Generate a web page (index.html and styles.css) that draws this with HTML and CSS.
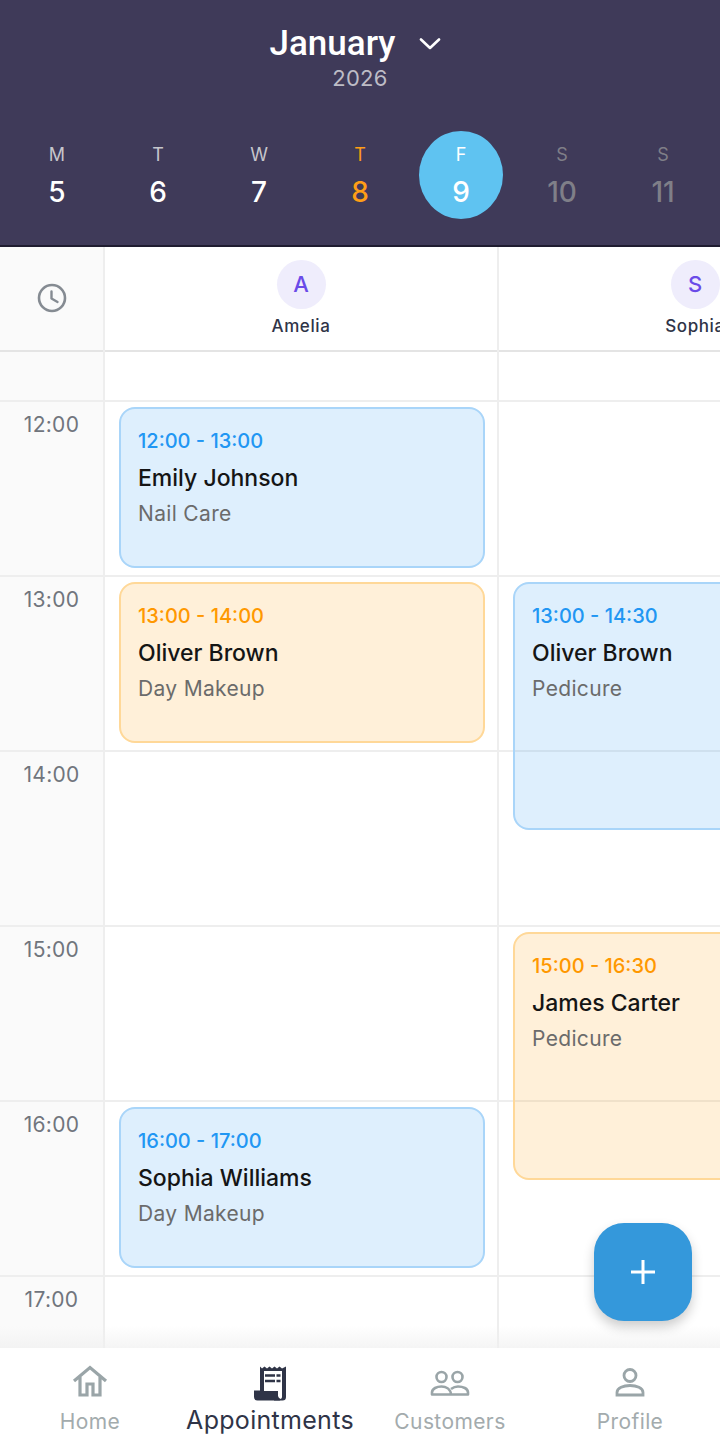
FILE: index.html
```html
<!DOCTYPE html>
<html lang="en">
<head>
    <meta charset="UTF-8">
    <meta name="viewport" content="width=device-width, initial-scale=1.0">
    <title>Appointments</title>
    <link rel="stylesheet" href="styles.css">
</head>
<body>
<div class="app">
    <header class="cal-header">
        <div class="month-row">
            <span class="month-name">January</span>
            <svg class="month-chevron" width="22" height="12" viewBox="0 0 22 12"><path d="M2 1.500 L11 10 L20 1.500" fill="none" stroke="#fff" stroke-width="2.600" stroke-linecap="round" stroke-linejoin="round"/></svg>
        </div>
        <div class="year">2026</div>
        <div class="week">
            <div class="day"><span class="day-letter">M</span><span class="day-num">5</span></div>
            <div class="day"><span class="day-letter">T</span><span class="day-num">6</span></div>
            <div class="day"><span class="day-letter">W</span><span class="day-num">7</span></div>
            <div class="day day-today"><span class="day-letter">T</span><span class="day-num">8</span></div>
            <div class="day day-selected"><span class="day-letter">F</span><span class="day-num">9</span></div>
            <div class="day day-off"><span class="day-letter">S</span><span class="day-num">10</span></div>
            <div class="day day-off"><span class="day-letter">S</span><span class="day-num">11</span></div>
        </div>
    </header>

    <main class="board">
        <div class="time-col">
            <div class="col-head">
                <svg width="32" height="32" viewBox="0 0 32 32"><circle cx="16" cy="16" r="13" fill="none" stroke="#858b92" stroke-width="2.600"/><path d="M15.500 9.500 V16.500 L21.500 20" fill="none" stroke="#858b92" stroke-width="2.400" stroke-linecap="round" stroke-linejoin="round"/></svg>
            </div>
            <div class="stub"></div>
            <div class="hour hour-label">12:00</div>
            <div class="hour hour-label">13:00</div>
            <div class="hour hour-label">14:00</div>
            <div class="hour hour-label">15:00</div>
            <div class="hour hour-label">16:00</div>
            <div class="hour hour-label">17:00</div>
        </div>

        <div class="staff-col">
            <div class="col-head">
                <div class="avatar">A</div>
                <div class="staff-name">Amelia</div>
            </div>
            <div class="col-body">
                <div class="stub"></div>
                <div class="hour"></div>
                <div class="hour"></div>
                <div class="hour"></div>
                <div class="hour"></div>
                <div class="hour"></div>
                <div class="hour"></div>
                <div class="event event-blue" style="top: 55px; height: 161px">
                    <div class="event-time">12:00 - 13:00</div>
                    <div class="event-name">Emily Johnson</div>
                    <div class="event-service">Nail Care</div>
                </div>
                <div class="event event-orange" style="top: 230px; height: 161px">
                    <div class="event-time">13:00 - 14:00</div>
                    <div class="event-name">Oliver Brown</div>
                    <div class="event-service">Day Makeup</div>
                </div>
                <div class="event event-blue" style="top: 755px; height: 161px">
                    <div class="event-time">16:00 - 17:00</div>
                    <div class="event-name">Sophia Williams</div>
                    <div class="event-service">Day Makeup</div>
                </div>
            </div>
        </div>

        <div class="staff-col">
            <div class="col-head">
                <div class="avatar">S</div>
                <div class="staff-name">Sophia</div>
            </div>
            <div class="col-body">
                <div class="stub"></div>
                <div class="hour"></div>
                <div class="hour"></div>
                <div class="hour"></div>
                <div class="hour"></div>
                <div class="hour"></div>
                <div class="hour"></div>
                <div class="event event-blue" style="top: 230px; height: 248px">
                    <div class="event-time">13:00 - 14:30</div>
                    <div class="event-name">Oliver Brown</div>
                    <div class="event-service">Pedicure</div>
                </div>
                <div class="event event-orange" style="top: 580px; height: 248px">
                    <div class="event-time">15:00 - 16:30</div>
                    <div class="event-name">James Carter</div>
                    <div class="event-service">Pedicure</div>
                </div>
            </div>
        </div>

        <div class="board-fade"></div>
        <button class="fab" type="button" aria-label="Add">
            <svg width="26" height="26" viewBox="0 0 26 26"><path d="M13 1 V25 M1 13 H25" stroke="#fff" stroke-width="3"/></svg>
        </button>
    </main>

    <nav class="tabbar">
        <div class="tab">
            <svg class="tab-icon" width="36" height="32" viewBox="0 0 36 32"><path d="M2 16 L18 2.500 L34 16 M8 12 V30 H15 V19 H21 V30 H28 V12" fill="none" stroke="#9aa5a8" stroke-width="3.200"/></svg>
            <span class="tab-label">Home</span>
        </div>
        <div class="tab tab-active">
            <svg class="tab-icon" width="32" height="35" viewBox="0 0 32 35"><path d="M6 0.500 L8 2.500 L10.500 0.500 L13 2.500 L15.500 0.500 L18 2.500 L20.500 0.500 L23 2.500 L25.500 0.500 L28 2.500 L32 0.500 V31 A3.500 3.500 0 0 1 28.500 34.500 H3.500 A3.500 3.500 0 0 1 0 31 V24.500 H6 Z" fill="#2f3447"/><path d="M10 5 H28 V31 A2 2 0 0 1 26.500 33 A4 4 0 0 1 24 30 V25 H10 Z" fill="#fff"/><path d="M24 25 V30 A4 4 0 0 0 26.500 34.500 H20 V25 Z" fill="#2f3447"/><path d="M11 9.500 H21 M11 15 H21 M22.500 9.500 H26.500 M22.500 15 H26.500" stroke="#2f3447" stroke-width="2.400"/></svg>
            <span class="tab-label">Appointments</span>
        </div>
        <div class="tab">
            <svg class="tab-icon" width="40" height="28" viewBox="0 0 40 28"><circle cx="11.500" cy="8" r="5" fill="none" stroke="#9aa5a8" stroke-width="2.600"/><circle cx="27.500" cy="8" r="5" fill="none" stroke="#9aa5a8" stroke-width="2.600"/><path d="M2 25.500 V23.500 C2 19.500 7 17.500 11.500 17.500 C15.500 17.500 20.500 19.500 21 25.500 Z M21 20 C23 18.500 25.500 17.500 28 17.500 C33 17.500 38 19.500 38 23.500 V25.500 H21" fill="none" stroke="#9aa5a8" stroke-width="2.600" stroke-linejoin="round"/></svg>
            <span class="tab-label">Customers</span>
        </div>
        <div class="tab">
            <svg class="tab-icon" width="30" height="30" viewBox="0 0 30 30"><circle cx="15" cy="8.500" r="6" fill="none" stroke="#9aa5a8" stroke-width="2.800"/><path d="M2 28 V25.500 C2 21 8.500 18.500 15 18.500 C21.500 18.500 28 21 28 25.500 V28 Z" fill="none" stroke="#9aa5a8" stroke-width="2.800"/></svg>
            <span class="tab-label">Profile</span>
        </div>
    </nav>
</div>
</body>
</html>
```

FILE: styles.css
```css
html,
body {
    width: 100%;
    height: 100%;
    margin: 0;
    padding: 0;
}
body {
    font-family: Inter, "Liberation Sans", sans-serif;
    background-color: #ffffff;
    overflow: hidden;
}
.app {
    display: flex;
    flex-direction: column;
    width: 720px;
    height: 1450px;
}

/* header */
.cal-header {
    flex: none;
    box-sizing: border-box;
    height: 247px;
    padding: 24px 0 0;
    background-color: #3f3a59;
    border-bottom: 2px solid #1f1c30;
    color: #ffffff;
}
.month-row {
    display: flex;
    justify-content: center;
    align-items: center;
    gap: 24px;
    height: 40px;
    padding-right: 9px;
}
.month-name {
    font-family: Roboto, Inter, sans-serif;
    font-size: 35px;
    font-weight: 500;
    line-height: 40px;
}
.year {
    font-size: 22px;
    line-height: 28px;
    letter-spacing: .3px;
    text-align: center;
    color: #bdbcc6;
}
.week {
    display: flex;
    justify-content: center;
    gap: 17px;
    margin-top: 39px;
}
.day {
    display: flex;
    flex-direction: column;
    align-items: center;
    width: 84px;
    height: 88px;
    padding-top: 12px;
    box-sizing: border-box;
    border-radius: 50%;
}
.day-letter {
    font-size: 18px;
    line-height: 24px;
    color: #c6c6cc;
}
.day-num {
    margin-top: 8px;
    font-size: 28px;
    font-weight: 500;
    line-height: 34px;
}
.day-today .day-letter,
.day-today .day-num {
    color: #ff9e16;
}
.day-selected {
    background-color: #5fc3f1;
}
.day-selected .day-letter {
    color: #ffffff;
}
.day-off .day-letter,
.day-off .day-num {
    color: #7f7f88;
}

/* board */
.board {
    position: relative;
    flex: 1;
    display: flex;
    overflow: hidden;
    background-color: #ffffff;
}
.time-col {
    flex: none;
    width: 105px;
    box-sizing: border-box;
    background-color: #fafafa;
    border-right: 2px solid #eeeeee;
}
.staff-col {
    flex: none;
    width: 394px;
    box-sizing: border-box;
    border-right: 2px solid #eeeeee;
}
.col-head {
    display: flex;
    flex-direction: column;
    align-items: center;
    justify-content: center;
    box-sizing: border-box;
    height: 105px;
    border-bottom: 2px solid #e4e4e4;
}
.time-col .col-head {
    padding-bottom: 2px;
}
.avatar {
    display: flex;
    align-items: center;
    justify-content: center;
    width: 49px;
    height: 49px;
    padding-bottom: 2px;
    box-sizing: border-box;
    border-radius: 50%;
    background-color: #efedfc;
    color: #6a4be8;
    font-size: 22px;
    font-weight: 500;
}
.staff-name {
    margin-top: 6px;
    font-size: 17px;
    font-weight: 500;
    line-height: 22px;
    letter-spacing: .6px;
    color: #2f3447;
}
.col-body {
    position: relative;
}
.stub {
    box-sizing: border-box;
    height: 50px;
    border-bottom: 2px solid #eeeeee;
}
.hour {
    box-sizing: border-box;
    height: 175px;
    border-bottom: 2px solid #eeeeee;
}
.hour-label {
    padding-top: 10px;
    font-size: 21px;
    line-height: 26px;
    letter-spacing: .3px;
    text-align: center;
    color: #70757d;
}

/* appointments */
.event {
    position: absolute;
    left: 14px;
    right: 12px;
    box-sizing: border-box;
    padding: 20px 18px 0 17px;
    border-radius: 16px;
    border: 2px solid;
}
.event-blue {
    background-color: rgba(33, 150, 243, .15);
    border-color: #a9d5f9;
}
.event-orange {
    background-color: rgba(255, 152, 0, .15);
    border-color: #ffd898;
}
.event-time {
    font-size: 20px;
    font-weight: 500;
    line-height: 24px;
}
.event-blue .event-time {
    color: #2196f3;
}
.event-orange .event-time {
    color: #ff9800;
}
.event-name {
    margin-top: 11px;
    font-size: 23px;
    font-weight: 500;
    line-height: 28px;
    color: #151515;
}
.event-service {
    margin-top: 9px;
    font-size: 21px;
    line-height: 26px;
    letter-spacing: .33px;
    color: #6b6b6b;
}

/* fab + fade sit on top of the board */
.board-fade {
    position: absolute;
    left: 0;
    right: 0;
    bottom: 0;
    height: 22px;
    background: linear-gradient(to bottom, rgba(240, 240, 240, 0), rgba(240, 240, 240, .7));
}
.fab {
    position: absolute;
    right: 28px;
    bottom: 27px;
    display: flex;
    align-items: center;
    justify-content: center;
    width: 98px;
    height: 98px;
    padding: 0;
    border: none;
    border-radius: 30px;
    background-color: #3498db;
    box-shadow: 0 6px 12px rgba(0, 0, 0, .2);
}

/* bottom tabs */
.tabbar {
    flex: none;
    display: grid;
    grid-template-columns: repeat(4, 180px);
    height: 102px;
    background-color: #ffffff;
}
.tab {
    display: flex;
    flex-direction: column;
    align-items: center;
    justify-content: flex-end;
    padding-bottom: 15px;
}
.tab-icon {
    margin-bottom: 12px;
}
.tab-label {
    font-size: 21px;
    line-height: 26px;
    letter-spacing: .4px;
    color: #a3abad;
}
.tab-active .tab-label {
    font-size: 25px;
    line-height: 30px;
    letter-spacing: .3px;
    color: #2f3447;
}
.tab-active .tab-icon {
    margin-bottom: 4px;
}
```
